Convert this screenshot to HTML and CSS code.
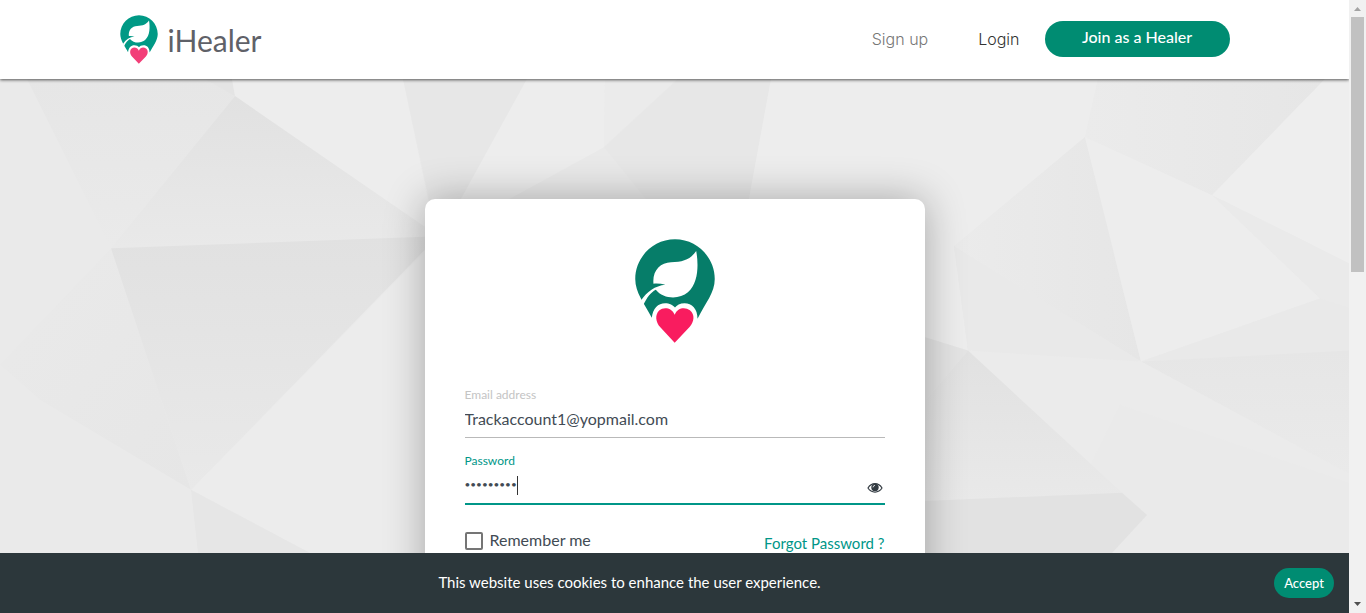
FILE: index.html
```html
<!DOCTYPE html>
<html lang="en">
<head>
<meta charset="utf-8">
<title>iHealer - Login</title>
<link rel="stylesheet" href="styles.css">
</head>
<body>
<svg class="defs" width="0" height="0" aria-hidden="true">
  <symbol id="pin" viewBox="105 56 240 314">
    <path fill="currentColor" d="M225 57C291 57 345 111 345 177C345 218 318 248 293 297C293 266 276 250 254 250C240 250 230 256 225 263C220 256 208 250 195 250C174 250 158 265 155 294C132 250 105 218 105 177C105 111 159 57 225 57Z"/>
    <path fill="#fff" d="M289 92C296 130 297 188 264 217C238 239 190 238 167 209C152 217 140 232 129 256L122 242C140 215 165 197 196 194C184 191 172 190 160 191C156 152 180 127 213 126C250 125 270 119 289 92Z"/>
    <path class="pin-heart" d="M224 285C215 262 190 261 178 271C163 285 167 307 180 322L224 369L269 322C283 306 286 284 270 271C256 261 233 262 224 285Z"/>
  </symbol>
</svg>
<div class="window">
  <div class="page">
    <header class="header">
      <div class="container">
        <a class="brand" href="#"><svg class="brand-pin" aria-hidden="true"><use href="#pin"/></svg><span>iHealer</span></a>
        <nav class="nav">
          <a class="nav-link muted" href="#">Sign up</a>
          <a class="nav-link" href="#">Login</a>
          <button class="btn join" type="button">Join as a Healer</button>
        </nav>
      </div>
    </header>
    <main class="main">
      <svg class="backdrop" viewBox="0 80 1349 473" preserveAspectRatio="none" aria-hidden="true">
        <defs>
          <linearGradient id="down" x1="0" y1="0" x2="0" y2="1"><stop offset="0" stop-color="#e1e1e1"/><stop offset="1" stop-color="#e9e9e9"/></linearGradient>
          <linearGradient id="soft" x1="0" y1="0" x2="0" y2="1"><stop offset="0" stop-color="#e6e6e6"/><stop offset="1" stop-color="#eaeaea"/></linearGradient>
          <linearGradient id="across" x1="0" y1="0" x2="1" y2="0"><stop offset="0" stop-color="#ebebeb"/><stop offset="1" stop-color="#e6e6e6"/></linearGradient>
          <linearGradient id="fade" x1="0" y1="0" x2="1" y2="1"><stop offset="0" stop-color="#eaeaea"/><stop offset="1" stop-color="#e6e6e6"/></linearGradient>
        </defs>
        <path fill="#eaeaea" d="M0 80H1349V553H0Z"/>
        <path fill="url(#soft)" d="M27 80H232L235 97L111 249Z"/>
        <path fill="#e4e4e4" d="M205 80H232L235 97Z"/>
        <path fill="#ededed" d="M232 80H403L430 210L425 228L235 97Z"/>
        <path fill="url(#down)" d="M235 97L440 238L111 249Z"/>
        <path fill="url(#fade)" d="M111 249L191 490L40 400L0 365Z"/>
        <path fill="#ececec" d="M440 237L191 490L310 553H440Z"/>
        <path fill="url(#down)" d="M111 249L438 237L191 490Z"/>
        <path fill="#e6e6e6" d="M191 490L310 553H198Z"/>
        <path fill="#e7e7e7" d="M403 80H527L460 205H430Z"/>
        <path fill="#ededed" d="M527 80H605L604 148L510 205H458Z"/>
        <path fill="#ebebeb" d="M605 80H678L604 148Z"/>
        <path fill="#e9e9e9" d="M604 148L500 205H650Z"/>
        <path fill="#e7e7e7" d="M678 80H771L748 205H650L604 148Z"/>
        <path fill="#ededed" d="M771 80H1098L1085 138L954 247L968 351L900 330V205H748Z"/>
        <path fill="url(#across)" d="M1098 80H1325L1212 196L1085 138Z"/>
        <path fill="#eee" d="M1325 80H1349V264L1212 196Z"/>
        <path fill="#eaeaea" d="M1212 196L1349 264V310L1320 299Z"/>
        <path fill="url(#across)" d="M1085 138L1141 362L954 247Z"/>
        <path fill="#e9e9e9" d="M954 247L1141 362L968 351Z"/>
        <path fill="#ededed" d="M1085 138L1212 196L1320 299L1141 362Z"/>
        <path fill="#e9e9e9" d="M1141 362L1320 299L1349 308V352Z"/>
        <path fill="url(#soft)" d="M1141 362L1349 351V474Z"/>
        <path fill="#ebebeb" d="M968 351L1141 362L1349 474V483L1120 405L1090 466Z"/>
        <path fill="#e4e4e4" d="M968 351L900 330V430Z"/>
        <path fill="url(#down)" d="M968 351L1122 493L900 502V430Z"/>
        <path fill="#e2e2e2" d="M900 502L1122 493L1147 515L1112 553H900Z"/>
      </svg>
      <form class="card">
        <svg class="card-pin" role="img" aria-label="iHealer"><use href="#pin"/></svg>
        <div class="field">
          <label for="email">Email address</label>
          <input id="email" type="email" value="Trackaccount1@yopmail.com">
        </div>
        <div class="field active">
          <label for="password">Password</label>
          <input id="password" type="password" value="trackpass">
          <span class="caret"></span>
          <button class="reveal" type="button" aria-label="Show password">
            <svg viewBox="0 0 16 12" width="16" height="12"><path fill="none" stroke="#333b42" stroke-width="1.2" d="M1 6C4.500 .2 11.500 .2 15 6C11.500 11.400 4.500 11.400 1 6Z"/><circle cx="8" cy="5.400" r="3.700" fill="#333b42"/><path fill="none" stroke="#fff" stroke-width=".8" d="M6 5.400Q6 3.500 8 3.400"/></svg>
          </button>
        </div>
        <div class="options">
          <label class="remember"><input type="checkbox"><span>Remember me</span></label>
          <a href="#">Forgot Password ?</a>
        </div>
      </form>
    </main>
    <footer class="cookies">
      <p>This website uses cookies to enhance the user experience.</p>
      <button class="btn accept" type="button">Accept</button>
    </footer>
  </div>
  <div class="scrollbar" aria-hidden="true">
    <svg viewBox="0 0 17 17"><path fill="#a3a3a3" d="M5 11H12L8.500 7Z"/></svg>
    <div class="thumb"></div>
    <svg class="end" viewBox="0 0 17 17"><path fill="#505050" d="M5 6H12L8.500 10Z"/></svg>
  </div>
</div>
</body>
</html>
```
FILE: styles.css
```css
* { box-sizing: border-box; }
body { margin: 0; font-family: Lato, "Open Sans", sans-serif; font-size: 16px; line-height: 24px; color: #424b54; }
a { color: inherit; text-decoration: none; }
button, input { font: inherit; color: inherit; }
.defs { display: block; height: 0; }
.window { display: flex; height: 100vh; overflow: hidden; }
.page { flex: 1; min-width: 0; display: flex; flex-direction: column; overflow: hidden; }

.header { position: relative; z-index: 1; background: #fff; box-shadow: 0 1px 3px rgba(0, 0, 0, .65); }
.container { max-width: 1110px; height: 79px; margin: 0 auto; display: flex; align-items: center; justify-content: space-between; }
.brand { display: flex; align-items: center; gap: 10px; font-size: 30px; color: #5f6168; }
.brand-pin { width: 38px; height: 49px; color: #009985; fill: #f23f78; }
.nav { display: flex; align-items: center; padding-bottom: 2px; }
.nav-link { margin-right: 50px; color: #333; font-family: Inter, sans-serif; font-weight: 300; }
.nav-link + .nav-link { margin-right: 25px; }
.nav-link.muted { color: #777; }
.btn { border: 0; color: #fff; background: #008c72; font-weight: 500; cursor: pointer; }
.join { width: 185px; height: 36px; padding-bottom: 4px; border-radius: 18px; }

.main { position: relative; flex: 1; min-height: 0; overflow: hidden; padding-top: 120px; }
.backdrop { position: absolute; inset: 0; width: 100%; height: 100%; }
.card { position: relative; max-width: 500px; margin: 0 auto; padding: 40px; background: #fff; border-radius: 10px; box-shadow: 0 0 40px rgba(0, 0, 0, .3); }
.card-pin { display: block; width: 80px; height: 104px; margin: 0 auto 44px; color: #067d69; fill: #f91c5f; }
.field { position: relative; display: flex; flex-direction: column; margin-bottom: 15px; border-bottom: 1px solid #b9b9b9; }
.field label { font-size: 12px; line-height: 16px; color: #c4c4c4; }
.field input { width: 100%; height: 34px; padding: 0 0 4px; border: 0; outline: 0; background: none; }
.field.active { border-bottom: 2px solid #009688; }
.field.active label { color: #009688; }
.field.active input { font-size: 10px; }
.caret { position: absolute; left: 52px; bottom: 8px; width: 1px; height: 19px; background: #333; }
.reveal { position: absolute; right: 2px; bottom: 9px; display: flex; padding: 0; border: 0; background: none; }
.options { display: flex; justify-content: space-between; margin-top: 22px; }
.options a { padding-top: 4px; font-size: 15px; color: #009688; }
.remember { display: flex; align-items: center; gap: 7px; }
.remember span { padding-bottom: 2px; }
.remember input { appearance: none; width: 18px; height: 18px; margin: 0; border: 2px solid #757575; border-radius: 2px; background: #fff; }

.cookies { display: flex; align-items: center; height: 60px; padding: 0 15px; background: #2c373b; color: #fff; font-size: 15px; }
.cookies p { flex: 1; margin: 0; padding: 0 30px 2px 0; text-align: center; }
.accept { width: 60px; height: 30px; padding: 0; border-radius: 15px; font-size: 13px; }

.scrollbar { width: 17px; display: flex; flex-direction: column; background: #f1f1f1; }
.scrollbar svg { width: 17px; height: 17px; }
.thumb { height: 255px; margin: 0 2px; background: #c1c1c1; }
.scrollbar .end { margin-top: auto; }
```
